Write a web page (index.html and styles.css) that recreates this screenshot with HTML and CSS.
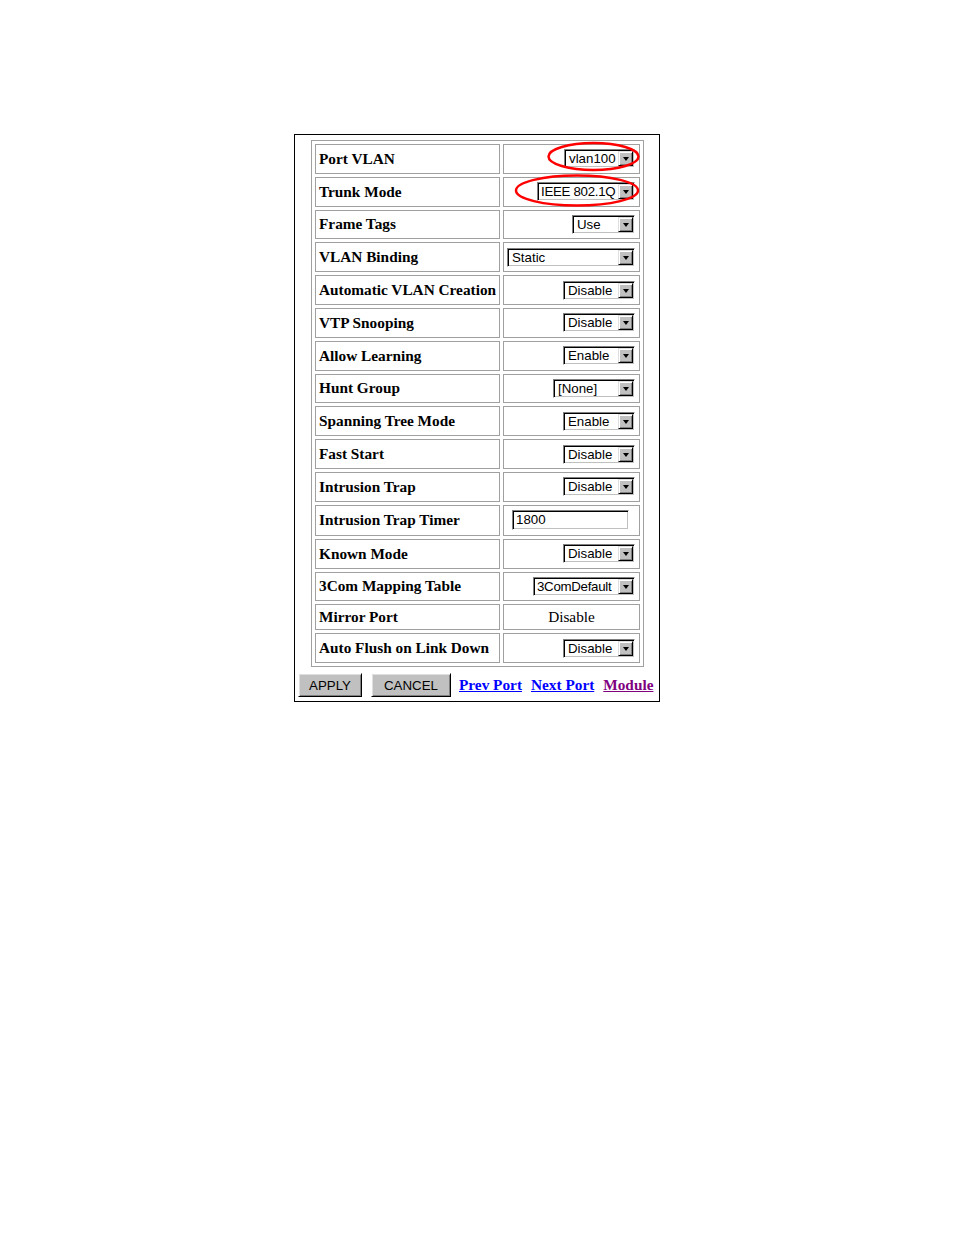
FILE: index.html
```html
<!DOCTYPE html>
<html>
<head>
<meta charset="utf-8">
<title>Port Setup</title>
<link rel="stylesheet" href="styles.css">
</head>
<body>
<div class="page">
  <div class="box">
    <div class="grid">
      <div class="lbl">Port VLAN</div>
      <div class="val"><div class="sel w71"><span class="sel-val">vlan100</span><span class="sel-btn"></span></div></div>

      <div class="lbl">Trunk Mode</div>
      <div class="val"><div class="sel w98"><span class="sel-val tight">IEEE 802.1Q</span><span class="sel-btn"></span></div></div>

      <div class="lbl">Frame Tags</div>
      <div class="val"><div class="sel w63"><span class="sel-val">Use</span><span class="sel-btn"></span></div></div>

      <div class="lbl">VLAN Binding</div>
      <div class="val"><div class="sel w128"><span class="sel-val">Static</span><span class="sel-btn"></span></div></div>

      <div class="lbl">Automatic VLAN Creation</div>
      <div class="val"><div class="sel w72"><span class="sel-val">Disable</span><span class="sel-btn"></span></div></div>

      <div class="lbl">VTP Snooping</div>
      <div class="val"><div class="sel w72"><span class="sel-val">Disable</span><span class="sel-btn"></span></div></div>

      <div class="lbl">Allow Learning</div>
      <div class="val"><div class="sel w72"><span class="sel-val">Enable</span><span class="sel-btn"></span></div></div>

      <div class="lbl">Hunt Group</div>
      <div class="val"><div class="sel w82"><span class="sel-val">[None]</span><span class="sel-btn"></span></div></div>

      <div class="lbl">Spanning Tree Mode</div>
      <div class="val"><div class="sel w72"><span class="sel-val">Enable</span><span class="sel-btn"></span></div></div>

      <div class="lbl">Fast Start</div>
      <div class="val"><div class="sel w72"><span class="sel-val">Disable</span><span class="sel-btn"></span></div></div>

      <div class="lbl">Intrusion Trap</div>
      <div class="val"><div class="sel w72"><span class="sel-val">Disable</span><span class="sel-btn"></span></div></div>

      <div class="lbl tall">Intrusion Trap Timer</div>
      <div class="val tall start"><div class="txt">1800</div></div>

      <div class="lbl">Known Mode</div>
      <div class="val"><div class="sel w72"><span class="sel-val">Disable</span><span class="sel-btn"></span></div></div>

      <div class="lbl">3Com Mapping Table</div>
      <div class="val"><div class="sel w102"><span class="sel-val tight">3ComDefault</span><span class="sel-btn"></span></div></div>

      <div class="lbl short">Mirror Port</div>
      <div class="val short center"><span class="plain">Disable</span></div>

      <div class="lbl">Auto Flush on Link Down</div>
      <div class="val"><div class="sel w72"><span class="sel-val">Disable</span><span class="sel-btn"></span></div></div>
    </div>

    <div class="actions">
      <button class="btn apply">APPLY</button>
      <button class="btn cancel">CANCEL</button>
      <a class="lnk" href="#prev">Prev Port</a>
      <a class="lnk" href="#next">Next Port</a>
      <a class="lnk visited" href="#module">Module</a>
    </div>

    <svg class="marks" width="366" height="568" viewBox="0 0 366 568">
      <ellipse cx="299.5" cy="22.5" rx="45" ry="13.5" fill="none" stroke="#ff0000" stroke-width="2.5"/>
      <ellipse cx="283" cy="56.5" rx="61" ry="15" fill="none" stroke="#ff0000" stroke-width="2.5"/>
    </svg>
  </div>
</div>
</body>
</html>
```

FILE: styles.css
```css
html, body {
  margin: 0;
  padding: 0;
  background: #fff;
}

.page {
  padding: 134px 0 0 294px;
}

.box {
  position: relative;
  width: 364px;
  border: 1px solid #000;
  padding: 5px 0 4px 0;
  background: #fff;
}

.grid {
  display: grid;
  grid-template-columns: 185px 137px;
  grid-auto-rows: auto;
  gap: 3px;
  padding: 3px;
  border: 1px solid #a0a0a0;
  box-sizing: border-box;
  width: 333px;
  margin-left: 16px;
}

.lbl, .val {
  box-sizing: border-box;
  border: 1px solid #a0a0a0;
  display: flex;
  align-items: center;
  height: 29.8px;
}

.lbl {
  padding-left: 3px;
  font-family: "Liberation Serif", "Times New Roman", serif;
  font-weight: bold;
  font-size: 15.3px;
  color: #000;
  white-space: nowrap;
}

.val {
  justify-content: flex-end;
  padding-right: 4px;
}

.val.start {
  justify-content: flex-start;
  padding-left: 8px;
}

.val.center {
  justify-content: center;
  padding-right: 0;
}

.tall {
  height: 31px;
}

.short {
  height: 26px;
}

.plain {
  font-family: "Liberation Serif", "Times New Roman", serif;
  font-size: 15.3px;
  color: #000;
}

/* classic windows select */
.sel {
  display: flex;
  align-items: center;
  box-sizing: border-box;
  height: 19px;
  border: 1px solid;
  border-color: #808080 #fff #fff #808080;
  box-shadow: inset 1px 1px 0 #000, inset -1px -1px 0 #c0c0c0;
  padding: 1px;
  background: #fff;
}

.sel-val {
  flex: 1;
  min-width: 0;
  padding-left: 3px;
  font-family: "Liberation Sans", Arial, sans-serif;
  font-size: 13.3px;
  line-height: 15px;
  color: #000;
  white-space: nowrap;
  overflow: hidden;
}

.sel-val.tight {
  padding-left: 2px;
  letter-spacing: -0.3px;
}

.sel-btn {
  flex: none;
  display: flex;
  align-items: center;
  justify-content: center;
  box-sizing: border-box;
  width: 15px;
  height: 15px;
  background: #c0c0c0;
  border: 1px solid;
  border-color: #dfdfdf #000 #000 #dfdfdf;
  box-shadow: inset 1px 1px 0 #fff, inset -1px -1px 0 #808080;
}

.sel-btn::after {
  content: "";
  width: 0;
  height: 0;
  border-style: solid;
  border-width: 4px 3.5px 0 3.5px;
  border-color: #000 transparent transparent transparent;
  margin-top: 1px;
}

.w63 { width: 63px; }
.w71 { width: 71px; }
.w72 { width: 72px; }
.w82 { width: 82px; }
.w98 { width: 98px; }
.w102 { width: 102px; }
.w128 { width: 128px; }

.txt {
  box-sizing: border-box;
  width: 117px;
  height: 20px;
  border: 1px solid;
  border-color: #808080 #fff #fff #808080;
  box-shadow: inset 1px 1px 0 #000, inset -1px -1px 0 #c0c0c0;
  padding: 1px 0 0 3px;
  font-family: "Liberation Sans", Arial, sans-serif;
  font-size: 13.3px;
  line-height: 16px;
  color: #000;
  background: #fff;
}

/* actions */
.actions {
  display: flex;
  align-items: center;
  margin-top: 6px;
  padding-left: 3px;
  height: 24px;
}

.btn {
  box-sizing: border-box;
  height: 24px;
  margin: 0;
  padding: 0;
  background: #c0c0c0;
  border: 1px solid;
  border-color: #fff #000 #000 #fff;
  box-shadow: inset 1px 1px 0 #dfdfdf, inset -1px -1px 0 #808080;
  font-family: "Liberation Sans", Arial, sans-serif;
  font-size: 13.3px;
  color: #000;
  border-radius: 0;
}

.apply {
  width: 64px;
  margin-right: 9px;
}

.cancel {
  width: 80px;
  margin-right: 8px;
}

.lnk {
  font-family: "Liberation Serif", "Times New Roman", serif;
  font-weight: bold;
  font-size: 15.3px;
  color: #0000ff;
  text-decoration: underline;
  margin-right: 9px;
  white-space: nowrap;
}

.lnk.visited {
  color: #800080;
  margin-right: 0;
}

.marks {
  position: absolute;
  left: -1px;
  top: -1px;
  pointer-events: none;
}
```
